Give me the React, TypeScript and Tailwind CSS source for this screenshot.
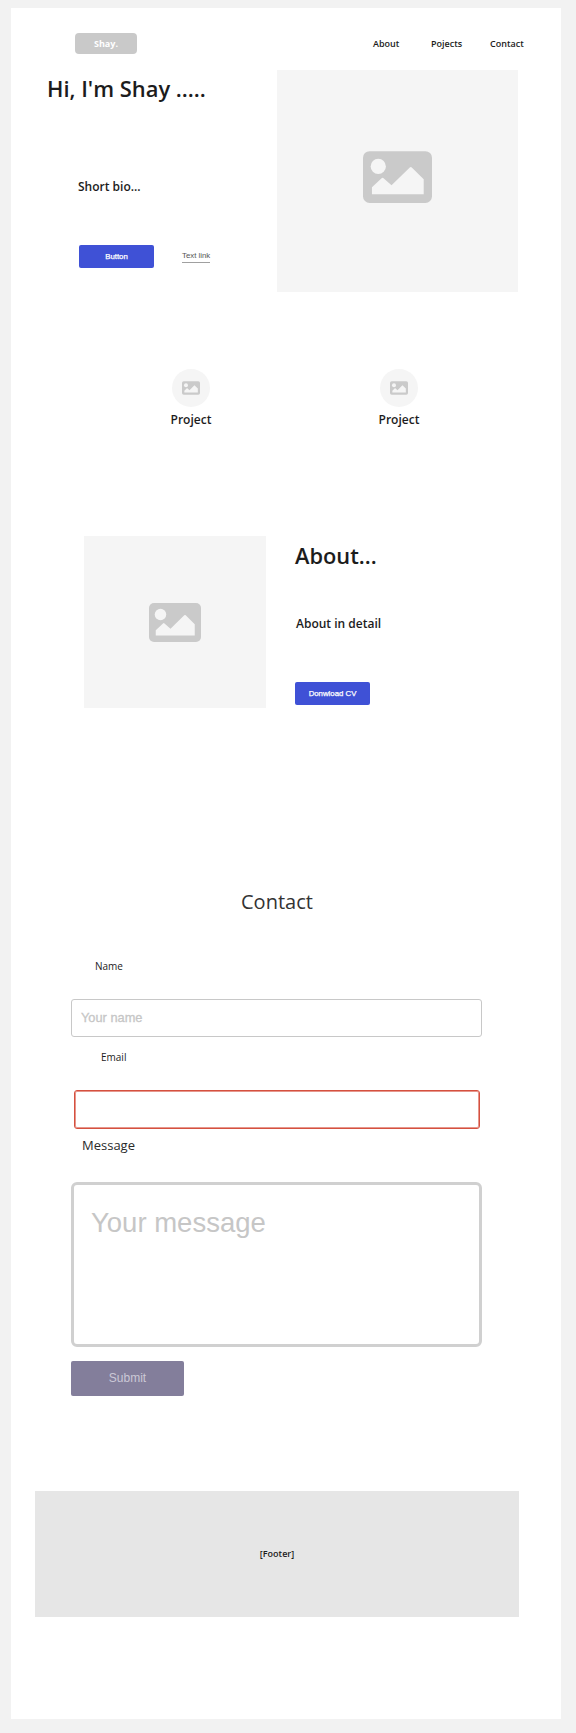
function ImageIcon({ className }: { className: string }) {
  return (
    <svg viewBox="0 0 208 156" className={className} aria-hidden="true">
      <rect width="208" height="156" rx="20" fill="#cacaca" />
      <circle cx="46" cy="46" r="23" fill="#f5f5f5" />
      <path
        d="M27 109 L56 81.500 Q59 79 62 81.500 L86 103 L141 49 Q144 46 147 49 L183 85 V130 H27 Z"
        fill="#f5f5f5"
      />
    </svg>
  );
}

function PrimaryButton({ label }: { label: string }) {
  return (
    <button
      type="button"
      className="flex h-[23px] w-[75px] items-center justify-center rounded-[2px] bg-[#3f51d6] font-['Liberation_Sans',sans-serif] text-[7.8px] leading-none whitespace-nowrap text-white [-webkit-text-stroke:0.25px_white]"
    >
      {label}
    </button>
  );
}

function Project() {
  return (
    <article className="flex w-52 flex-col items-center gap-[5px]">
      <div className="flex size-[38px] items-center justify-center rounded-full bg-[#f5f5f5]">
        <ImageIcon className="h-3.5 w-[18px]" />
      </div>
      <h3 className="text-xs leading-4 font-semibold">Project</h3>
    </article>
  );
}

export default function App() {
  return (
    <div className="h-[1733px] w-[576px] bg-[#f2f2f2] pt-2 pl-[11px] font-['Open_Sans',sans-serif] text-[#1c1c1c]">
      <main className="flex h-[1711px] w-[550px] flex-col bg-white">
        <header className="flex h-[46px] items-end pl-16 text-[9px] leading-[21px] font-semibold">
          <div className="h-[21px] w-[62px] rounded-[4px] bg-[#c9c9c9] text-center font-bold text-white">
            Shay.
          </div>
          <nav className="ml-[236px] flex">
            <a className="w-[58px]">About</a>
            <a className="w-[59px]">Pojects</a>
            <a>Contact</a>
          </nav>
        </header>

        <section className="mt-4 flex h-[222px]">
          <div className="w-[266px] pt-1">
            <h1 className="pl-9 text-[21.9px] leading-[30px] font-semibold">Hi, I'm Shay .....</h1>
            <p className="mt-[75px] pl-[67px] text-xs leading-4 font-semibold">Short bio...</p>
            <div className="mt-[50px] flex items-start pl-[68px]">
              <PrimaryButton label="Button" />
              <a className="mt-1 ml-7 h-[14px] border-b border-[#a0a0a0] pt-px font-['Liberation_Sans',sans-serif] text-[7.8px] leading-3 text-[#555]">
                Text link
              </a>
            </div>
          </div>
          <div className="flex w-[241px] justify-center bg-[#f5f5f5] pt-[81px]">
            <ImageIcon className="h-[52px] w-[69px]" />
          </div>
        </section>

        <section className="mt-[77px] flex h-[59px] pl-[76px]">
          <Project />
          <Project />
        </section>

        <section className="mt-[108px] flex h-[172px] pl-[73px]">
          <div className="flex w-[182px] items-center justify-center bg-[#f5f5f5]">
            <ImageIcon className="h-[39px] w-[52px]" />
          </div>
          <div className="pt-[5px] pl-[29px]">
            <h2 className="text-[21.8px] leading-[30px] font-semibold">About...</h2>
            <p className="mt-[45px] pl-px text-xs leading-4 font-semibold">About in detail</p>
            <div className="mt-[50px]">
              <PrimaryButton label="Donwload CV" />
            </div>
          </div>
        </section>

        <section className="mt-[180px] flex flex-col">
          <h2 className="pl-[230px] text-xl leading-7 text-[#333]">Contact</h2>
          <label className="mt-[43px] pl-[84px] text-[10px] leading-[14px]">Name</label>
          <div className="mt-[26px] ml-[60px] flex h-[38px] w-[411px] items-center rounded-[3px] border border-[#c8c8c8] pl-[9px] font-['Liberation_Sans',sans-serif] text-[12.8px] text-[#c6c6c6] [-webkit-text-stroke:0.3px_#c6c6c6]">
            Your name
          </div>
          <label className="mt-[13px] pl-[90px] text-[10px] leading-[14px]">Email</label>
          <div className="mt-[26px] ml-[63px] h-[39px] w-[406px] rounded-[3px] border border-[#d5503f] shadow-[inset_0_0_0_1px_rgba(213,80,63,0.6)]" />
          <label className="mt-[7px] pl-[71px] text-[13px] leading-[18px] text-[#2a2a2a]">Message</label>
          <div className="mt-7 ml-[60px] h-[165px] w-[411px] rounded-[6px] border-3 border-[#d0d0d0] pt-[22px] pl-[17px] font-['Liberation_Sans',sans-serif] text-[27.5px] leading-8 text-[#c6c6c6]">
            Your message
          </div>
          <button
            type="button"
            className="mt-[14px] ml-[60px] h-[35px] w-[113px] rounded-[2px] bg-[#837e9b] pb-px font-['Liberation_Sans',sans-serif] text-xs text-[#cbc8d6]"
          >
            Submit
          </button>
        </section>

        <footer className="mt-[95px] ml-6 flex h-[126px] w-[484px] items-center justify-center bg-[#e6e6e6] text-[9px] font-semibold">
          [Footer]
        </footer>
      </main>
    </div>
  );
}
